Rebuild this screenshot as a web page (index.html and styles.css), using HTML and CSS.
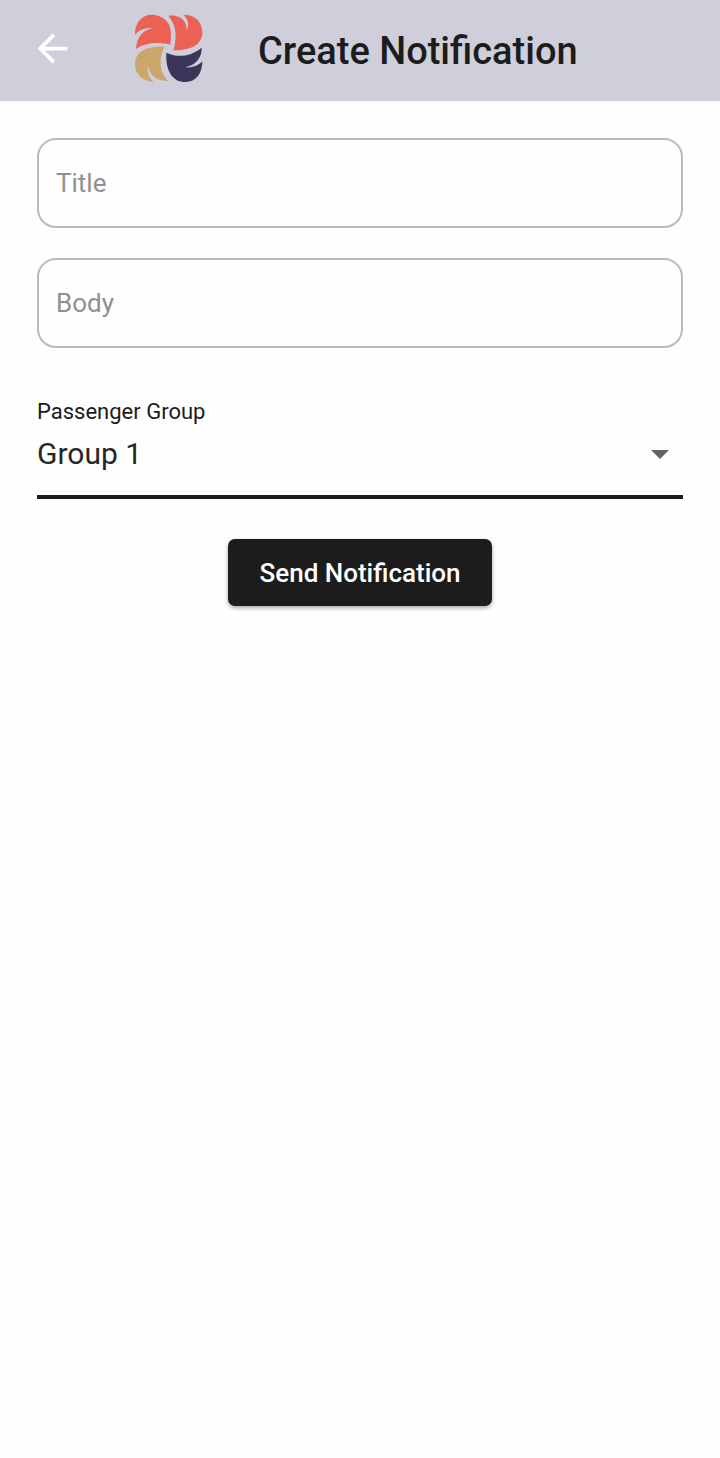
FILE: index.html
```html
<!DOCTYPE html>
<html lang="en">
<head>
  <meta charset="utf-8">
  <meta name="viewport" content="width=device-width, initial-scale=1">
  <title>Create Notification</title>
  <link rel="stylesheet" href="styles.css">
</head>
<body>
  <header class="app-bar">
    <button class="back" type="button" aria-label="Back">
      <svg class="back-icon" viewBox="0 0 24 24" aria-hidden="true">
        <path d="M20 11H7.83l5.59-5.59L12 4l-8 8 8 8 1.41-1.41L7.83 13H20z"/>
      </svg>
    </button>
    <svg class="logo" viewBox="27 27 207 207" aria-hidden="true">
      <path class="coral" d="M33 132C35 100 51 76 83 69C58 67 39 76 30 90C29 53 51 29 80 29C101 29 138 42 138 86C138 98 137 109 136 119C96 110 60 114 33 132Z"/>
      <path class="coral" d="M130 32C148 29 171 35 179 51C185 62 186 68 184 78C195 58 189 41 174 30C207 27 232 48 232 82C232 116 203 137 145 136C155 105 158 64 130 32Z"/>
      <path class="gold" d="M119 125C103 153 99 198 130 228C105 229 74 218 68 180C65 202 73 220 86 231C52 229 30 208 30 178C30 142 61 123 119 125Z"/>
      <path class="navy" d="M124 143C156 159 197 155 230 128C231 151 219 178 181 187C203 189 221 181 232 169C232 205 214 231 181 231C144 231 121 199 124 143Z"/>
    </svg>
    <h1 class="title">Create Notification</h1>
  </header>
  <main>
    <form class="form">
      <input class="text-field" type="text" name="title" placeholder="Title" aria-label="Title">
      <input class="text-field" type="text" name="body" placeholder="Body" aria-label="Body">
      <div class="group">
        <label class="group-label" for="group">Passenger Group</label>
        <div class="select-wrap">
          <select class="select" id="group" name="group">
            <option>Group 1</option>
          </select>
          <svg class="caret" viewBox="0 0 18 9" aria-hidden="true"><path d="M0 0h18L9 9z"/></svg>
        </div>
      </div>
      <button class="submit" type="button">Send Notification</button>
    </form>
  </main>
</body>
</html>
```

FILE: styles.css
```css
* {
  box-sizing: border-box;
}

body {
  margin: 0;
  background: #fefefe;
  color: #1c1c1c;
  font-family: Roboto, "Liberation Sans", sans-serif;
}

.app-bar {
  display: flex;
  align-items: center;
  min-height: 101px;
  padding: 0 30px 4px;
  background: #cfcedb;
}

.back {
  display: flex;
  margin-right: 59px;
  padding: 0;
  border: 0;
  background: none;
}

.back-icon {
  width: 45px;
  height: 45px;
  fill: #fff;
}

.logo {
  flex: none;
  width: 69px;
  height: 69px;
  margin-right: 55px;
}

.coral {
  fill: #eb6153;
}

.gold {
  fill: #cda66c;
}

.navy {
  fill: #3d345a;
}

.title {
  margin: 4px 0 0;
  font-size: 38px;
  font-weight: 500;
  line-height: 44px;
}

.form {
  display: flex;
  flex-direction: column;
  gap: 30px;
  padding: 37px;
}

.text-field {
  width: 100%;
  height: 90px;
  padding: 0 17px;
  border: 2px solid #bababa;
  border-radius: 19px;
  background: transparent;
  color: inherit;
  font: 26px/32px Roboto, "Liberation Sans", sans-serif;
}

.text-field::placeholder {
  color: #909090;
  opacity: 1;
}

.group {
  margin-top: 21px;
  border-bottom: 4px solid #1c1c1c;
}

.group-label {
  display: block;
  font-size: 22px;
  line-height: 26px;
}

.select-wrap {
  position: relative;
}

.select {
  display: block;
  width: 100%;
  height: 70px;
  padding: 0 40px 13px 0;
  border: 0;
  appearance: none;
  background: transparent;
  color: #262626;
  font: 30px/36px Roboto, "Liberation Sans", sans-serif;
}

.caret {
  position: absolute;
  top: 25px;
  right: 14px;
  width: 18px;
  height: 9px;
  fill: #616161;
  pointer-events: none;
}

.submit {
  align-self: center;
  height: 67px;
  margin-top: 10px;
  padding: 0 31px;
  border: 0;
  border-radius: 7px;
  background: #1c1c1c;
  box-shadow: 0 2px 4px rgba(0, 0, 0, 0.35);
  color: #fff;
  font: 500 26px/32px Roboto, "Liberation Sans", sans-serif;
}
```
